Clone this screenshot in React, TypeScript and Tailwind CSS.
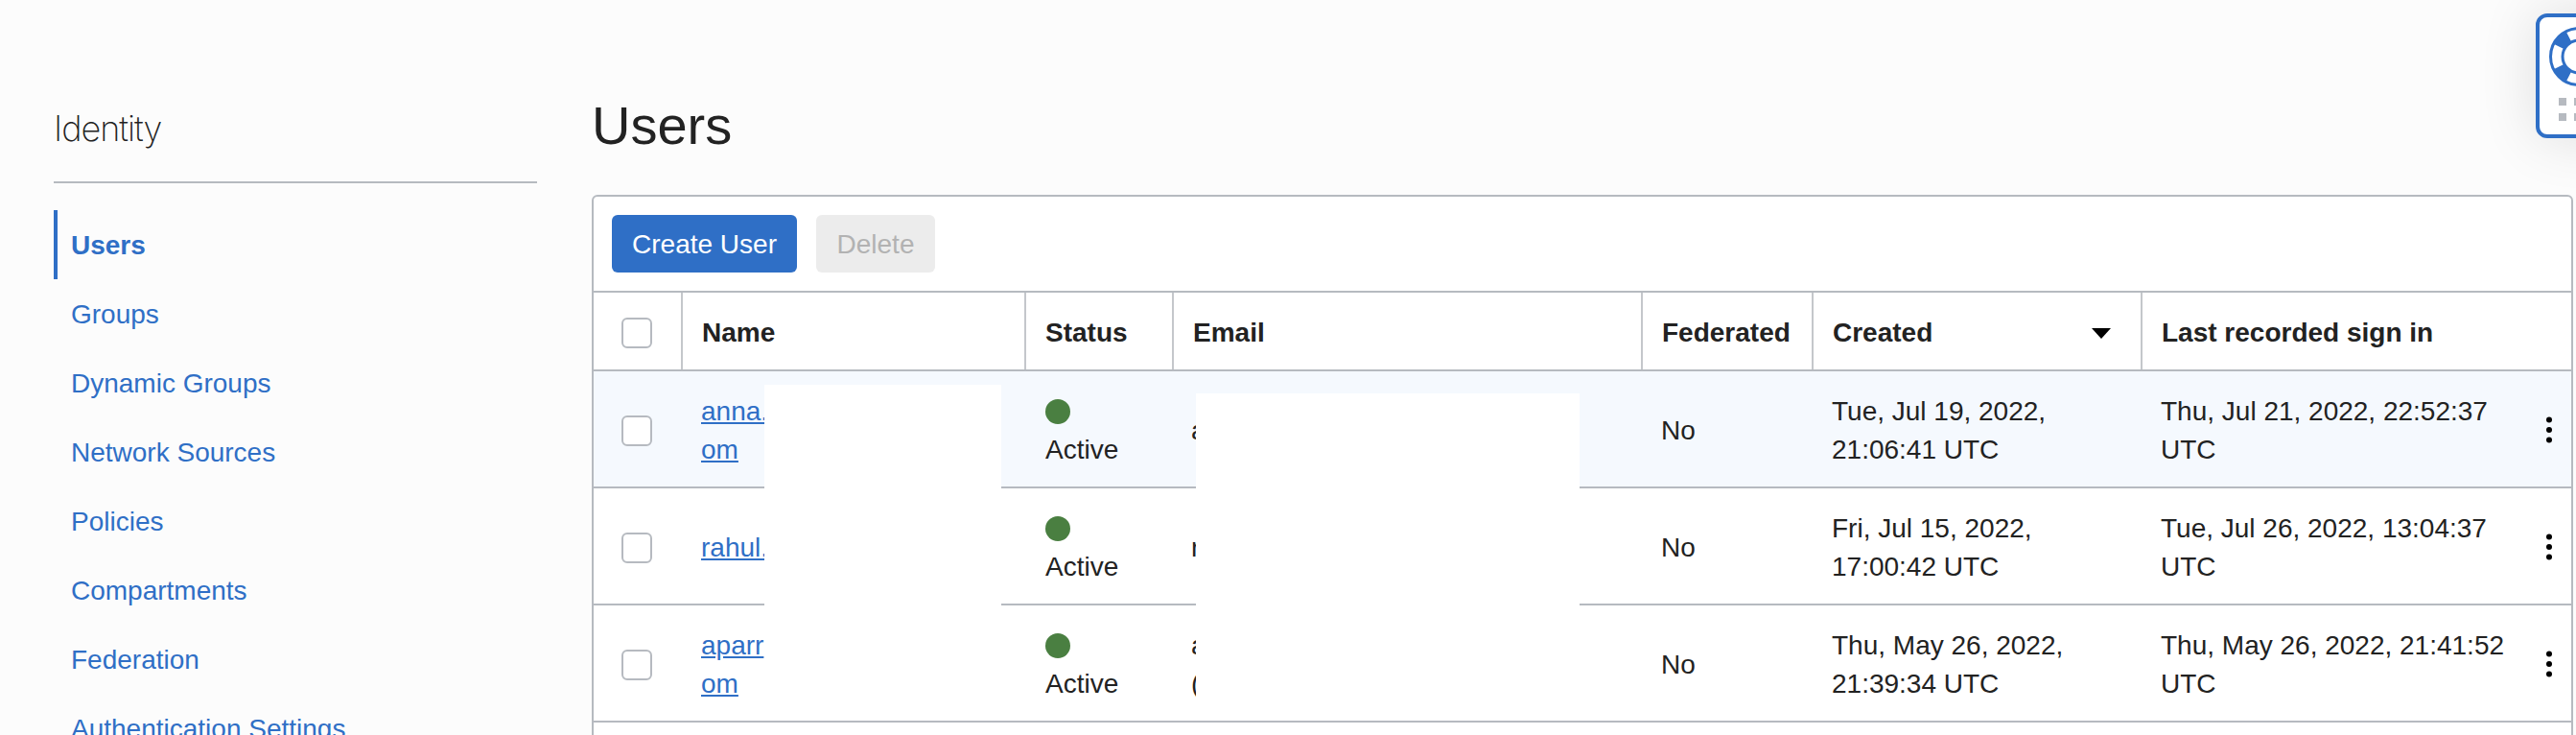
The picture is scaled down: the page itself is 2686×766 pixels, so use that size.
const rows = [
  {
    name: ['anna.', 'om'],
    email: ['a'],
    created: ['Tue, Jul 19, 2022,', '21:06:41 UTC'],
    last: ['Thu, Jul 21, 2022, 22:52:37', 'UTC'],
  },
  {
    name: ['rahul.'],
    email: ['r'],
    created: ['Fri, Jul 15, 2022,', '17:00:42 UTC'],
    last: ['Tue, Jul 26, 2022, 13:04:37', 'UTC'],
  },
  {
    name: ['aparr', 'om'],
    email: ['a', '('],
    created: ['Thu, May 26, 2022,', '21:39:34 UTC'],
    last: ['Thu, May 26, 2022, 21:41:52', 'UTC'],
  },
]

const navItems = ['Groups', 'Dynamic Groups', 'Network Sources', 'Policies', 'Compartments', 'Federation', 'Authentication Settings']

const columns = 'grid grid-cols-[93px_358px_154px_489px_178px_343px_1fr]'

function Checkbox() {
  return <div className="h-8 w-8 rounded-md border-2 border-[#b6bac0] bg-white" />
}

function Kebab() {
  return (
    <svg width="10" height="28" viewBox="0 0 10 28" className="absolute right-[18px] top-1/2 mt-px -translate-y-1/2">
      <circle cx="5" cy="3.5" r="3" fill="#000000" />
      <circle cx="5" cy="14" r="3" fill="#000000" />
      <circle cx="5" cy="24.5" r="3" fill="#000000" />
    </svg>
  )
}

function HeaderCell({ children, last }: { children: React.ReactNode; last?: boolean }) {
  return (
    <div className={`flex items-center justify-between px-5 pt-1 text-[28px] font-bold ${last ? '' : 'border-r-2 border-[#c4c7cb]'}`}>
      {children}
    </div>
  )
}

function HelpWidget() {
  return (
    <div className="absolute left-[2644px] top-[14px] h-[130px] w-[120px] rounded-xl border-4 border-[#2f6fc6] bg-white shadow-[0_0_60px_rgba(0,0,0,0.12)]">
      <svg width="62" height="62" viewBox="0 0 62 62" className="absolute left-[10px] top-[10px]">
        <circle cx="31" cy="31" r="29.5" fill="none" stroke="#2f6fc6" strokeWidth="3" />
        <circle cx="31" cy="31" r="17" fill="none" stroke="#2f6fc6" strokeWidth="3" />
        <circle cx="31" cy="31" r="23" fill="none" stroke="#2f6fc6" strokeWidth="12" pathLength="360" strokeDasharray="36 54" strokeDashoffset="-27" />
      </svg>
      <div className="absolute left-5 top-[84px] grid grid-cols-2 gap-2">
        <div className="h-2 w-2 bg-[#b6bac0]" />
        <div className="h-2 w-2 bg-[#b6bac0]" />
        <div className="h-2 w-2 bg-[#b6bac0]" />
        <div className="h-2 w-2 bg-[#b6bac0]" />
      </div>
    </div>
  )
}

export default function App() {
  return (
    <div className="relative flex h-[766px] w-[2686px] overflow-hidden bg-[#fcfcfc] font-['Liberation_Sans',Arial,sans-serif] text-[#222222]">
      <aside className="ml-14 w-[504px] shrink-0 pt-[112px]">
        <div className="h-[79px] border-b-2 border-[#b6bac0] font-['Inter',sans-serif] text-[36px] font-extralight leading-[44px] tracking-[-1px]">
          Identity
        </div>
        <nav className="mt-[28px] text-[28px] text-[#2f6fc6]">
          <div className="flex h-[72px] items-center border-l-4 border-[#2f6fc6] pl-[14px] pt-[2px] font-bold">Users</div>
          {navItems.map((item) => (
            <div key={item} className="flex h-[72px] items-center pl-[18px] pt-[2px]">
              {item}
            </div>
          ))}
        </nav>
      </aside>

      <main className="ml-[57px] w-[2066px] shrink-0 pt-[96px]">
        <h1 className="h-[107px] text-[56px] font-normal leading-[70px]">Users</h1>
        <div className="relative h-[600px] rounded-t-md border-2 border-[#b6bac0] bg-white">
          <div className="flex h-[100px] items-center gap-5 border-b-2 border-[#b6bac0] pl-[19px]">
            <button className="h-[60px] w-[193px] rounded-md bg-[#2f6fc6] pt-[2px] text-[28px] text-white">Create User</button>
            <button className="h-[60px] w-[124px] rounded-md bg-[#ececec] pt-[2px] text-[28px] text-[#b2b2b2]">Delete</button>
          </div>

          <div className={`${columns} h-[82px] border-b-2 border-[#b6bac0]`}>
            <div className="flex items-center border-r-2 border-[#c4c7cb] pl-[29px] pt-1">
              <Checkbox />
            </div>
            <HeaderCell>Name</HeaderCell>
            <HeaderCell>Status</HeaderCell>
            <HeaderCell>Email</HeaderCell>
            <HeaderCell>Federated</HeaderCell>
            <HeaderCell>
              Created
              <svg width="20" height="11" viewBox="0 0 20 11" className="mr-[11px]">
                <path d="M0 0 H20 L10 11 Z" fill="#000000" />
              </svg>
            </HeaderCell>
            <HeaderCell last>Last recorded sign in</HeaderCell>
          </div>

          {rows.map((row, i) => (
            <div
              key={row.created[1]}
              className={`${columns} relative h-[122px] border-b-2 border-[#b6bac0] text-[28px] leading-[40px] ${i === 0 ? 'bg-[#f5f9fe]' : ''}`}
            >
              <div className="flex items-center pl-[29px] pt-1">
                <Checkbox />
              </div>
              <div className="flex flex-col justify-center pl-[19px] pt-1 text-[#2f6fc6] underline">
                {row.name.map((line) => (
                  <div key={line}>{line}</div>
                ))}
              </div>
              <div className="flex flex-col justify-center pl-5 pt-1">
                <div className="flex h-10 items-center">
                  <div className="h-[26px] w-[26px] rounded-full bg-[#4a7f41]" />
                </div>
                <div>Active</div>
              </div>
              <div className="flex flex-col justify-center pl-[18px] pt-1">
                {row.email.map((line) => (
                  <div key={line}>{line}</div>
                ))}
              </div>
              <div className="flex items-center pl-[19px] pt-1">No</div>
              <div className="flex flex-col justify-center pl-[19px] pt-1">
                {row.created.map((line) => (
                  <div key={line}>{line}</div>
                ))}
              </div>
              <div className="flex flex-col justify-center pl-[19px] pt-1">
                {row.last.map((line) => (
                  <div key={line}>{line}</div>
                ))}
              </div>
              <Kebab />
            </div>
          ))}

          {/* redacted blocks over the name and email columns */}
          <div className="absolute left-[178px] top-[196px] h-[340px] w-[247px] bg-white" />
          <div className="absolute left-[628px] top-[205px] h-[340px] w-[400px] bg-white" />
        </div>
      </main>

      <HelpWidget />
    </div>
  )
}
